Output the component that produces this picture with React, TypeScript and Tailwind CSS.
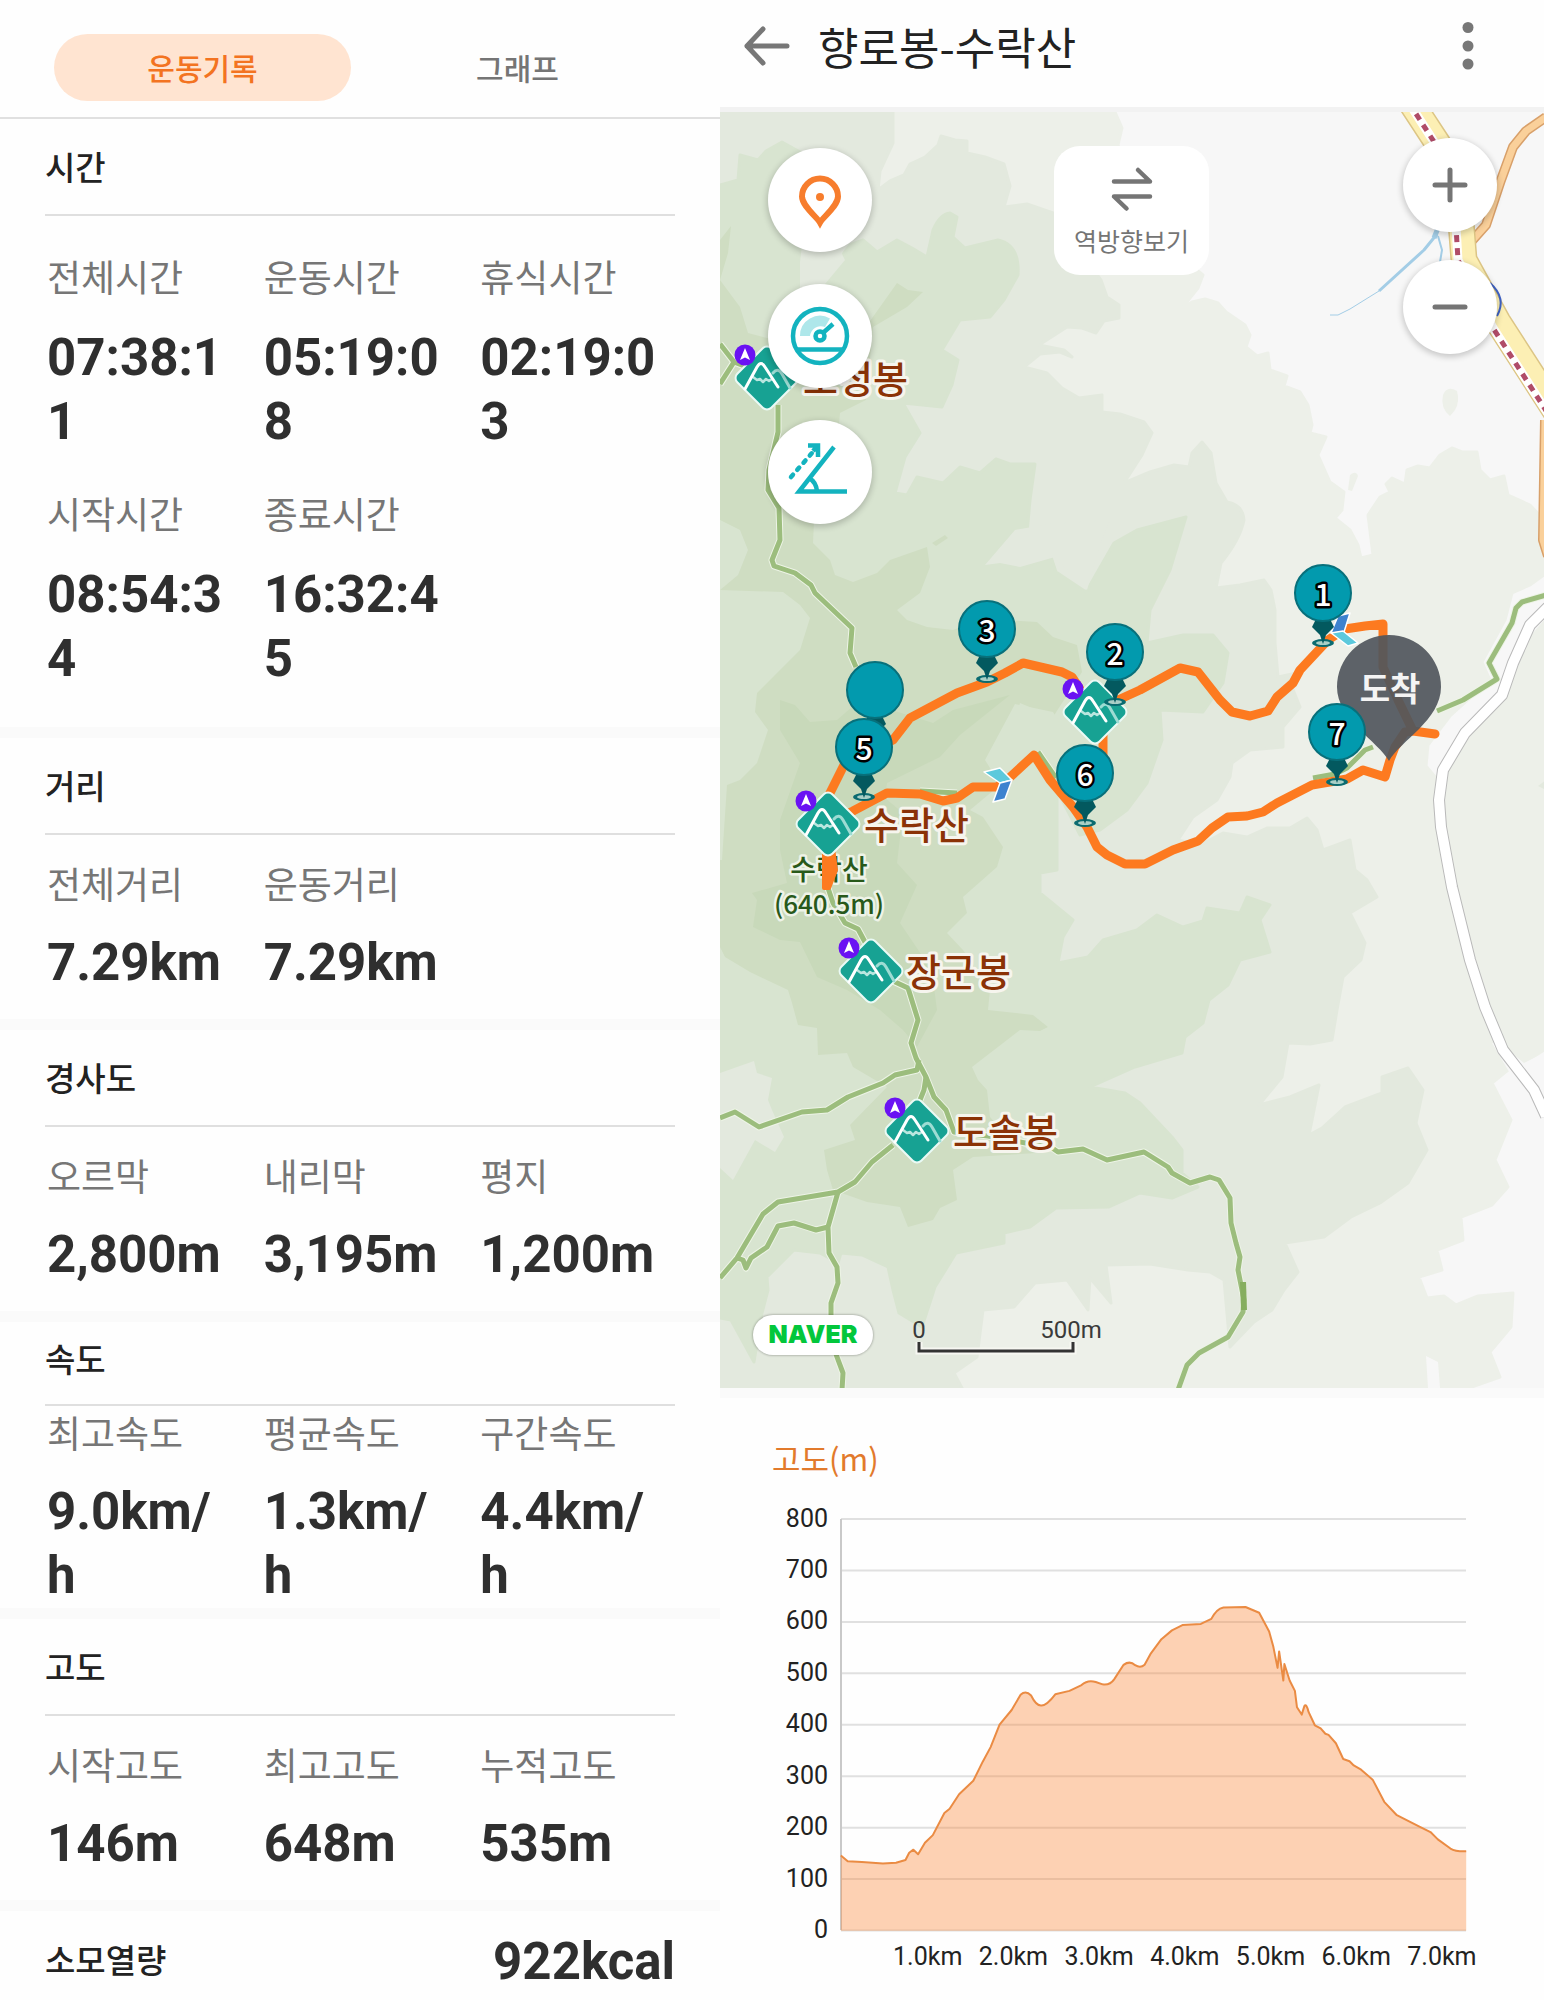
import React from "react";

type Stat = { label: string; value: string };

const timeStats: Stat[] = [
  { label: "전체시간", value: "07:38:11" },
  { label: "운동시간", value: "05:19:08" },
  { label: "휴식시간", value: "02:19:03" },
  { label: "시작시간", value: "08:54:34" },
  { label: "종료시간", value: "16:32:45" },
];

const distanceStats: Stat[] = [
  { label: "전체거리", value: "7.29km" },
  { label: "운동거리", value: "7.29km" },
];

const slopeStats: Stat[] = [
  { label: "오르막", value: "2,800m" },
  { label: "내리막", value: "3,195m" },
  { label: "평지", value: "1,200m" },
];

const speedStats: Stat[] = [
  { label: "최고속도", value: "9.0km/h" },
  { label: "평균속도", value: "1.3km/h" },
  { label: "구간속도", value: "4.4km/h" },
];

const altitudeStats: Stat[] = [
  { label: "시작고도", value: "146m" },
  { label: "최고고도", value: "648m" },
  { label: "누적고도", value: "535m" },
];

const KR = "font-['Noto_Sans_CJK_KR','Noto_Sans',sans-serif]";

function Section({
  title,
  stats,
  head = "h-[97px]",
  body = "py-6",
  gap = "gap-6",
}: {
  title: string;
  stats: Stat[];
  head?: string;
  body?: string;
  gap?: string;
}) {
  return (
    <section className="border-b-[11px] border-[#fafafa] px-[45px]">
      <h2
        className={`flex items-center border-b-2 border-[#dfdfdf] text-[33px] font-medium text-[#222] ${head}`}
      >
        {title}
      </h2>
      <dl className={`grid grid-cols-3 gap-x-[22px] gap-y-[35px] pl-[2px] ${body}`}>
        {stats.map((s) => (
          <div key={s.label} className={`flex flex-col pr-3 ${gap}`}>
            <dt className="text-[37px] leading-[48px] whitespace-nowrap text-[#767676]">{s.label}</dt>
            <dd className="font-[Roboto,sans-serif] text-[51px] leading-[64px] font-bold break-all text-[#2f2f2f]">
              {s.value}
            </dd>
          </div>
        ))}
      </dl>
    </section>
  );
}

function RecordPanel() {
  return (
    <div className="flex flex-col">
      <div
        role="tablist"
        className="grid grid-cols-2 gap-[18px] border-b-2 border-[#e0e0e0] px-[54px] pt-[34px] pb-4"
      >
        <button
          role="tab"
          aria-selected="true"
          className="h-[67px] rounded-full bg-[#ffe4d1] text-[30px] font-medium text-[#f37321]"
        >
          운동기록
        </button>
        <button role="tab" aria-selected="false" className="h-[67px] text-[30px] font-medium text-[#757575]">
          그래프
        </button>
      </div>
      <Section title="시간" stats={timeStats} body="py-9" gap="gap-[26px]" />
      <Section title="거리" stats={distanceStats} />
      <Section title="경사도" stats={slopeStats} />
      <Section title="속도" stats={speedStats} head="h-[84px] pb-2" body="pt-[2px]" />
      <Section title="고도" stats={altitudeStats} />
      <section className="flex h-[89px] items-center justify-between px-[45px] pt-[13px]">
        <h2 className="pb-1 text-[33px] font-medium text-[#222]">소모열량</h2>
        <p className="font-[Roboto,sans-serif] text-[51px] leading-[64px] font-bold text-[#2f2f2f]">922kcal</p>
      </section>
    </div>
  );
}

const trails = [
  "M720 344L734 362L720 384M734 362L752 369",
  "M778 405V432L769 470L768 490L779 508L780 540L772 560L774 566L795 573L811 585L815 593L852 628L850 653L856 667",
  "M827 885L833 903L845 923L858 929L866 944",
  "M893 981L908 988L918 1020L911 1043L916 1058L926 1077L934 1097L946 1110L954 1132L988 1136L1053 1148",
  "M720 1118L735 1112L759 1127L802 1112L827 1110L848 1097L883 1083L895 1075L917 1070L919 1060",
  "M926 1077L924 1090L920 1100",
  "M893 1145L872 1162L855 1182L838 1192L778 1202L763 1214L737 1258L720 1278",
  "M838 1192L828 1227L829 1253L837 1267L838 1283L831 1303V1340L837 1357L843 1373L842 1390",
  "M828 1227L816 1230L794 1223L778 1226L767 1247L751 1258L746 1268L743 1260L737 1258",
  "M1048 1145L1058 1152L1083 1149L1107 1160L1144 1152L1168 1167L1172 1173L1190 1183L1210 1177L1219 1180L1230 1198L1231 1223L1236 1243L1240 1257L1238 1270L1244 1300L1243 1312L1228 1337L1199 1353L1187 1365L1178 1390",
  "M1546 595L1522 602L1516 608L1512 623L1489 663L1497 679L1463 700L1437 711",
  "M1373 747L1365 750L1347 768L1335 774L1313 778",
  "M920 791L957 793M1038 752L1056 778",
];

function Terrain() {
  return (
    <g strokeLinejoin="round" strokeWidth="3">
      <rect x="720" y="112" width="824" height="1276" fill="#f7f7f7" />
      <path
        fill="#edf0e9"
        stroke="#edf0e9"
        d="M720 112H1115L1122 128L1118 145L1160 240L1203 275L1198 288L1182 308L1192 302L1205 299L1218 303L1226 312L1245 325L1250 335L1246 347L1257 356L1268 353L1270 370L1287 376L1284 386L1300 392L1308 405L1312 425L1310 433L1326 437L1318 455L1330 482L1344 492L1342 510L1335 518L1350 530L1358 545L1361 558L1373 555L1368 515L1380 497L1390 492L1386 484L1392 478L1405 484L1407 470L1418 466L1430 468L1440 455L1452 448L1462 452L1477 452L1480 470L1490 480L1504 476L1508 495L1530 505L1544 520V575L1530 585L1512 593L1505 620L1494 640L1482 662L1490 680L1470 698L1450 716L1428 745L1426 766L1436 778L1440 860L1544 1050L1524 1063L1508 1070L1492 1083L1511 1120L1495 1160L1508 1187L1492 1205L1461 1217L1463 1240L1437 1250L1442 1270L1419 1277L1427 1298L1444 1296L1456 1305L1478 1296L1513 1293L1511 1327L1490 1352L1500 1377L1469 1388H720Z"
      />
      <path fill="#edf0e9" d="M1546 618L1532 634L1515 672L1503 700L1468 736L1446 772L1441 800L1444 850L1470 955L1500 1040L1546 1052Z" />
      <path fill="#e3e9de" d="M1538 786L1546 780V790Z" />
      <path fill="#edf0e9" d="M1443 395Q1447 385 1457 391Q1460 402 1455 410L1450 416Q1440 408 1443 395ZM1350 475Q1356 470 1358 476L1352 491L1348 490Z" />
      <path fill="#f7f7f7" d="M1492 1043L1508 1070L1544 1120V1053L1524 1063L1502 1045ZM1426 1356L1438 1362L1440 1388H1428Z" />
      <path
        fill="#e3e9de"
        stroke="#e3e9de"
        d="M720 112H893V143L880 171L878 190L890 181L904 175L910 164L925 157L938 145L941 136L955 140L967 141V153L985 157L1004 164L1010 186L1004 207L1027 204L1056 214L1080 250L1101 280L1107 297L1119 305V318L1104 321L1096 333L1082 328L1067 327L1039 345L1064 350L1072 357L1060 352L1040 354L1024 367L1047 373L1062 388L1079 398L1102 395V412L1120 414L1144 422L1152 433L1142 455L1124 483L1150 472L1174 465L1189 467L1192 453L1202 442L1211 453L1216 483L1227 502Q1243 505 1244 520Q1240 540 1221 563L1216 588L1240 585L1264 580L1271 590L1275 610V643L1278 677L1297 673L1292 687L1300 707L1283 727V747L1250 750L1232 763L1230 777L1217 800L1193 817L1178 840L1200 845L1223 833L1247 837L1267 828L1290 828L1307 818L1317 830L1323 850L1350 840L1355 870L1367 880L1377 897L1350 913L1365 943L1361 960L1343 977L1337 1010L1332 1040L1310 1044L1288 1043L1282 1077L1259 1105L1290 1097L1319 1085L1309 1135L1322 1128L1345 1107L1382 1093V1077L1408 1068L1423 1090L1416 1123L1427 1150L1408 1183L1380 1203L1351 1217L1324 1237L1285 1243L1298 1272L1284 1290L1272 1310L1254 1322L1230 1347L1224 1280L1210 1272L1188 1270L1150 1264L1106 1265L1111 1303L1090 1278L1088 1310L1067 1280L1035 1283L1014 1307L983 1310L977 1357L954 1373L962 1388H720Z"
      />
      <path
        fill="#d8e4d0"
        stroke="#d8e4d0"
        d="M720 185L738 180L740 155L758 160L766 151L782 142L800 152L812 175L800 260L835 265L850 245L863 240L877 252L897 240L912 248L927 257L933 230Q940 214 950 213L957 217L953 237L965 248L998 240Q1020 245 1018 275L1004 300L990 317L960 320L942 350L958 360L952 385L942 407L903 403L920 433L905 457L895 493L907 495L917 477L943 483L960 467L980 473L996 459L1010 464L1035 464L1030 500L1024 567L1051 557L1056 572L1086 592L1114 543L1137 530L1186 517L1170 570L1150 610L1147 643L1183 635H1213L1228 653L1223 683L1203 712L1160 710L1162 740L1147 783L1127 810L1100 830L1080 835L1057 790V870L1040 873V893L1073 920L1063 937L1058 963L1088 957L1103 940L1137 930L1157 915L1183 927L1203 921L1207 908L1240 913L1247 897L1270 905L1260 920L1270 952L1240 960L1228 985L1209 1000L1203 1023L1185 1037L1182 1053L1135 1067L1090 1087L1125 1093L1140 1103L1172 1137L1182 1150V1173L1198 1187L1172 1198L1140 1193L1109 1207L1056 1208L1030 1227L1004 1233V1243L956 1253L935 1287L922 1327L899 1313L893 1290L888 1267L862 1255L841 1253L838 1263L820 1253L794 1250L767 1277L768 1290L762 1313L754 1362L731 1320L720 1318Z"
      />
      <path fill="#e3e9de" d="M720 1073L754 1061L757 1073L772 1078L768 1100L772 1110L784 1137L775 1152L755 1140L733 1180L720 1168ZM800 262L802 245L835 240L845 260L820 290L800 300ZM985 565L1015 530L1050 524L1110 520L1100 545L1087 590L1072 575L1055 557L1020 567L1000 563Z" />
      <path
        fill="#cfddc2"
        d="M720 240L731 226L728 253L720 280L740 307L748 333L767 338L860 335L880 307L897 283L908 290L923 292L907 307L873 327L866 400L840 413L837 445L815 500L813 543L830 560L835 575L853 582L877 573L890 560L927 547L930 567L920 593L897 610L907 620L927 627L953 630L973 623L1003 620L1037 622L1053 637L1077 645L1082 672L1053 717L1020 703L1010 733L987 757L1000 785L970 810L983 817L1003 847L997 867L963 897L967 913L947 933L963 950L990 990L988 1010L1033 1015L1048 1027L1040 1031L1020 1030L1007 1040L972 1067L978 1080L987 1090L990 1117L1010 1140L1036 1153L973 1157L953 1170L957 1200L940 1208L933 1220L908 1227L900 1207L867 1202L833 1190L827 1170L824 1150L855 1140L850 1125L887 1087L853 1067L847 1053L818 1055L817 1028L798 1025L792 1003L788 990L750 972L725 957L720 947Z"
      />
      <path fill="#d8e4d0" d="M720 590L783 592L800 605L810 618L800 650L775 675L757 693L755 712L768 730L757 763L740 780L727 785L722 860L720 860ZM720 520L740 530L748 550L738 575L720 590ZM1015 704L1053 712L1070 740L1050 760L1057 790L1010 800L985 760Z" />
      <path
        fill="#c8d9ba"
        d="M780 700L795 705L810 722L837 720L860 700L933 723L953 710L1010 695L960 735L940 757L887 783L885 798L903 813L897 863L917 885L900 923L925 960L933 980L937 1010L917 1047L903 1030L880 1010L847 990L817 977L800 942L780 940L753 927L757 900L752 893L787 883L780 850V820L800 763L780 730Z"
      />
      <path fill="#cfddc2" d="M932 543L945 535L948 538L936 546Z" />
    </g>
  );
}

function Roads() {
  return (
    <g fill="none" strokeLinejoin="round">
      <g stroke="#a3cde6">
        <path strokeWidth="4" d="M1428 112L1432 122L1446 138" />
        <path strokeWidth="5" d="M1438 228L1434 238" />
        <path strokeWidth="3" d="M1437 234L1424 250L1379 291" />
        <path strokeWidth="1" d="M1379 291L1350 309L1338 315H1330" />
        <path strokeWidth="2" d="M1438 236L1442 250L1440 262" />
      </g>
      <path stroke="#d8a06a" strokeWidth="10" d="M1546 117L1526 131L1513 147L1501 180L1486 225L1470 243M1545 420L1543 540L1548 556" />
      <path stroke="#fad09a" strokeWidth="7" d="M1546 117L1526 131L1513 147L1501 180L1486 225L1470 243M1545 420L1543 540L1548 556" />
      <path stroke="#dcc585" strokeWidth="27" d="M1404 92L1442 150L1460 210L1464 260L1498 322L1556 412" />
      <path stroke="#fcefb4" strokeWidth="24" d="M1404 92L1442 150L1460 210L1464 260L1498 322L1556 412" />
      <path stroke="#ffffff" strokeWidth="9" d="M1402 92L1438 148L1455 210L1458 260L1493 328L1552 420" />
      <path stroke="#b04c68" strokeWidth="5" strokeDasharray="7 6" d="M1402 92L1438 148L1455 210L1458 260L1493 328L1552 420" />
      <path stroke="#3f62c4" strokeWidth="2" d="M1490 283Q1507 298 1497 316" />
      {trails.map((d) => (
        <path key={d} d={d} stroke="#edf4e6" strokeWidth="7" />
      ))}
      {trails.map((d) => (
        <path key={d} d={d} stroke="#9cbd7d" strokeWidth="5" />
      ))}
      <path stroke="#86ae5f" strokeWidth="6" d="M1243 1282L1244 1310" />
      <path stroke="#b9b9b9" strokeWidth="12" d="M1548 607L1530 625L1513 663L1502 695L1465 733L1443 770L1439 800L1441 827L1452 887L1470 960L1485 1007L1503 1050L1534 1090L1546 1116" />
      <path stroke="#ffffff" strokeWidth="10" d="M1548 607L1530 625L1513 663L1502 695L1465 733L1443 770L1439 800L1441 827L1452 887L1470 960L1485 1007L1503 1050L1534 1090L1546 1116" />
    </g>
  );
}

function Route() {
  return (
    <g fill="none" stroke="#fd7a20" strokeWidth="9" strokeLinecap="round" strokeLinejoin="round">
      <path d="M1435 734L1413 731L1398 700L1383 667V624L1365 626L1345 629L1328 640L1300 670L1293 683L1277 697L1268 711L1250 716L1232 712L1220 700L1198 672L1180 668L1140 690L1118 700L1095 712L1072 677L1062 672L1023 663L1005 673L987 682L957 693L910 718L893 740L845 763L828 797V823L853 811L887 793L920 794L943 801L957 798L973 787H997L1008 779L1034 755L1050 780L1073 807L1087 827L1097 847L1107 855L1125 864H1145L1173 850L1198 841L1212 828L1228 817L1247 816L1263 812L1277 803L1312 785L1347 779L1363 770L1385 777L1390 760L1395 747L1405 732L1413 731" />
      <path d="M1103 722V765" />
      <path fill="#fd7a20" strokeWidth="4" d="M824 848H833L836 870L829 888H824Z" />
    </g>
  );
}

function Peak({ x, y }: { x: number; y: number }) {
  return (
    <g transform={`translate(${x} ${y})`} fill="none" strokeLinecap="round" strokeLinejoin="round">
      <rect x="-24" y="-24" width="48" height="48" rx="6" transform="rotate(45)" fill="#17a293" stroke="#eafaf5" strokeWidth="2" />
      <path stroke="#9ddcd3" strokeWidth="3" d="M6 -5Q11 -11 15 -4L23 10" />
      <path stroke="#b9e6df" strokeWidth="2.5" d="M-14 -1L-10 2L-7 1L-4 4L-1 1L2 3L5 1" />
      <path stroke="#ffffff" strokeWidth="3" d="M-22 11L-10 -11Q-6 -18 -2 -11L11 9" />
      <circle cx="-22" cy="-23" r="10.5" fill="#6a12f3" />
      <path fill="#ffffff" d="M-22 -30L-17 -18L-22 -20.5L-27 -18Z" />
    </g>
  );
}

function Pin({ x, y, n }: { x: number; y: number; n?: string }) {
  return (
    <g transform={`translate(${x} ${y})`}>
      <ellipse cy="50" rx="11" ry="4" fill="#0a6b70" />
      <ellipse cy="50" rx="7" ry="2" fill="#a9cfc6" />
      <path fill="#03595f" d="M-7 26H7L11 34L3 42L0 51L-3 42L-11 34Z" />
      <circle r="28" fill="#029aae" stroke="#08707b" strokeWidth="2" />
      {n && (
        <text
          y="13"
          textAnchor="middle"
          fill="#fff"
          stroke="#000"
          strokeWidth="5"
          strokeLinejoin="round"
          paintOrder="stroke"
          className="text-[30px] font-medium"
        >
          {n}
        </text>
      )}
    </g>
  );
}

function PlaceName({ x, y, children }: { x: number; y: number; children: string }) {
  return (
    <text
      x={x}
      y={y}
      fill="#8b3206"
      stroke="#f6f5ee"
      strokeWidth="6"
      strokeLinejoin="round"
      paintOrder="stroke"
      className="text-[38px] font-medium"
    >
      {children}
    </text>
  );
}

function MapCanvas() {
  return (
    <svg viewBox="720 112 824 1276" className="block w-full" role="img" aria-label="향로봉-수락산 지도">
      <Terrain />
      <Roads />
      <text
        textAnchor="middle"
        fill="#28591a"
        stroke="#eef3e8"
        strokeWidth="5"
        strokeLinejoin="round"
        paintOrder="stroke"
        className="text-[26px] font-medium"
      >
        <tspan x="829" y="880" className="text-[28px]">수락산</tspan>
        <tspan x="829" y="914">(640.5m)</tspan>
      </text>
      <Route />
      <g stroke="#fff" strokeWidth="1.5" strokeLinejoin="round">
        <path fill="#3d82cf" d="M1338 616L1350 613L1344 632L1331 633Z" />
        <path fill="#5cc9dc" d="M1331 633L1343 631L1358 643L1348 646Z" />
        <path fill="#5cc9dc" d="M984 772L1000 768L1012 780L1000 783Z" />
        <path fill="#3d82cf" d="M1000 783L1012 780L1005 799L993 802Z" />
      </g>
      <Peak x={767} y={378} />
      <Peak x={1095} y={712} />
      <Peak x={828} y={824} />
      <Peak x={871} y={971} />
      <Peak x={917} y={1131} />
      <PlaceName x={803} y={393}>도정봉</PlaceName>
      <PlaceName x={864} y={839}>수락산</PlaceName>
      <PlaceName x={906} y={986}>장군봉</PlaceName>
      <PlaceName x={953} y={1146}>도솔봉</PlaceName>
      <path
        fill="#50565c"
        fillOpacity="0.92"
        d="M1389 761C1378 741 1337 720 1337 687A52 52 0 0 1 1441 687C1441 720 1400 741 1389 761Z"
      />
      <text x="1390" y="701" textAnchor="middle" fill="#f4f4f4" className="text-[33px] font-bold">
        도착
      </text>
      <Pin x={1323} y={593} n="1" />
      <Pin x={1115} y={652} n="2" />
      <Pin x={987} y={629} n="3" />
      <Pin x={875} y={690} />
      <Pin x={864} y={747} n="5" />
      <Pin x={1085} y={773} n="6" />
      <Pin x={1337} y={732} n="7" />
      <path d="M919 1342V1351H1073V1342" fill="none" stroke="#f7f7f2" strokeWidth="7" />
      <path d="M919 1342V1351H1073V1342" fill="none" stroke="#333" strokeWidth="3" />
      <g textAnchor="middle" fill="#3a3a3a" className="font-[Roboto,sans-serif] text-[24px]">
        <text x="919" y="1338">0</text>
        <text x="1071" y="1338">500m</text>
      </g>
    </svg>
  );
}

const roundButton =
  "flex items-center justify-center rounded-full bg-white shadow-[0_2px_6px_1px_rgba(0,0,0,0.2)]";

function MapView() {
  return (
    <div className="relative">
      <MapCanvas />
      <div className="absolute top-9 left-12 flex flex-col gap-8">
        <button aria-label="위치" className={`size-[104px] ${roundButton}`}>
          <svg viewBox="0 0 104 104" className="size-[104px]" fill="none">
            <path
              stroke="#f77d2d"
              strokeWidth="6"
              d="M52 74.5C49 69 34 58 34 48.500A18 18 0 0 1 70 48.500C70 58 55 69 52 74.5Z"
            />
            <circle cx="52" cy="49" r="4" fill="#f77d2d" />
          </svg>
        </button>
        <button aria-label="속도" className={`size-[104px] ${roundButton}`}>
          <svg viewBox="0 0 104 104" className="size-[104px]" fill="none" stroke="#13b3bf" strokeWidth="4.500">
            <path stroke="none" fill="#aee7ea" d="M32 52A20 20 0 0 1 62 34.500L57 43A11 11 0 0 0 42 52Z" />
            <circle cx="52" cy="52" r="27" />
            <path d="M28 65.500H76M56 48L65 40" />
            <circle cx="52" cy="52" r="4.500" fill="#fff" />
          </svg>
        </button>
        <button aria-label="경사" className={`size-[104px] ${roundButton}`}>
          <svg viewBox="0 0 104 104" className="size-[104px]" fill="none" stroke="#13b3bf" strokeWidth="4.500">
            <path d="M79 71.500H31L66 27M41 58Q48 62 49 71" />
            <path strokeDasharray="3 6.500" strokeLinecap="round" d="M23 57L44 33" />
            <path d="M40 25.500H50V37M50 25.500L45 31" />
          </svg>
        </button>
      </div>
      <button className="absolute top-[34px] left-[334px] flex h-[129px] w-[155px] flex-col items-center rounded-[26px] bg-white pt-[19px] text-[25px] leading-9 text-[#757575]">
        <svg
          viewBox="0 0 48 48"
          className="mb-[9px] size-12"
          fill="none"
          stroke="#757575"
          strokeWidth="4.500"
          strokeLinecap="round"
          strokeLinejoin="round"
        >
          <path d="M6 16.500H42L30 5M42 31.500H6L18.500 43.500" />
        </svg>
        역방향보기
      </button>
      <div className="absolute top-[26px] right-[47px] flex flex-col gap-7">
        <button aria-label="확대" className={`size-[94px] ${roundButton}`}>
          <svg viewBox="0 0 40 40" className="size-10" stroke="#757575" strokeWidth="5" strokeLinecap="round">
            <path d="M5 20H35M20 5V35" />
          </svg>
        </button>
        <button aria-label="축소" className={`size-[94px] ${roundButton}`}>
          <svg viewBox="0 0 40 40" className="size-10" stroke="#757575" strokeWidth="5" strokeLinecap="round">
            <path d="M5 20H35" />
          </svg>
        </button>
      </div>
      <a
        href="#naver"
        className="absolute bottom-[33px] left-[33px] flex h-10 w-[120px] items-center justify-center rounded-full bg-white font-[Inter,sans-serif] text-[25px] font-black text-[#03c73c] shadow-[0_0_2px_1px_rgba(0,0,0,0.2)]"
      >
        NAVER
      </a>
    </div>
  );
}

const altitudeTicks = [800, 700, 600, 500, 400, 300, 200, 100, 0];
const distanceTicks = [1, 2, 3, 4, 5, 6, 7];

/* Elevation profile in a 1568-unit square plotting space. */
const profile =
  "M230 1190L243 1205L270 1207L310 1211L335 1209L353 1202L360 1183L368 1175L377 1187L390 1157L405 1137L427 1079L437 1068L455 1030L482 995L500 945L515 907L532 848L555 810L572 770Q582 758 592 772Q602 800 612 798Q622 798 638 769L665 760L688 745Q700 730 715 737L728 743Q742 746 750 730L768 692Q780 680 790 693Q800 702 808 692L820 662L840 625L860 602L880 588L915 585L935 572Q945 545 958 542L1000 541L1026 556L1045 605L1053 645L1061 700L1064 657L1072 733L1074 690L1084 733L1094 760L1098 803L1107 822L1112 800Q1116 792 1120 815L1132 850L1143 858L1152 872L1158 875L1172 897L1186 938L1198 944L1206 955L1220 966L1242 992L1264 1050L1288 1085L1330 1114L1352 1129L1366 1148L1390 1172Q1400 1180 1420 1179";

function AltitudeChart() {
  return (
    <svg viewBox="720 1500 824 500" className="block w-full" role="img" aria-label="고도 그래프">
      <g stroke="#e0e0e0" strokeWidth="2">
        {altitudeTicks.map((v) => (
          <path key={v} d={`M841 ${1930.5 - v * 0.5143}H1466`} />
        ))}
      </g>
      <path d="M841 1519V1930" stroke="#c9c9c9" strokeWidth="2" />
      <g transform="translate(720 1400) scale(0.5255 0.3827)">
        <path d={`${profile}V1387H230Z`} fill="#fd7d29" fillOpacity="0.35" />
        <path d={profile} fill="none" stroke="#ea8b43" strokeWidth="2" strokeLinejoin="round" vectorEffect="non-scaling-stroke" />
      </g>
      <g fill="#222" className="font-[Roboto,sans-serif] text-[25px]">
        {altitudeTicks.map((v) => (
          <text key={v} x="828" y={1938 - v * 0.5143} textAnchor="end">
            {v}
          </text>
        ))}
        {distanceTicks.map((k) => (
          <text key={k} x={842 + k * 85.7} y="1965" textAnchor="middle">
            {`${k}.0km`}
          </text>
        ))}
      </g>
    </svg>
  );
}

function CoursePanel() {
  return (
    <div className="flex flex-col">
      <header className="flex h-28 items-center border-b-[5px] border-[#f2f2f2] pr-14 pb-4 pl-[22px]">
        <button aria-label="뒤로" className="flex size-12 items-center justify-center">
          <svg
            viewBox="0 0 48 48"
            className="size-12"
            fill="none"
            stroke="#777"
            strokeWidth="5"
            strokeLinecap="round"
            strokeLinejoin="round"
          >
            <path d="M45 24H5M21 7L5 24L21 41" />
          </svg>
        </button>
        <h1 className="ml-7 flex-1 text-[44px] leading-[64px] text-[#222]">향로봉-수락산</h1>
        <button aria-label="더보기" className="flex h-12 w-10 items-center justify-center">
          <svg viewBox="0 0 12 48" className="h-12 w-3" fill="#777">
            <circle cx="6" cy="5.500" r="5.500" />
            <circle cx="6" cy="24" r="5.500" />
            <circle cx="6" cy="42" r="5.500" />
          </svg>
        </button>
      </header>
      <MapView />
      <section className="border-t-[10px] border-[#fafafa]">
        <h2 className="mt-[38px] mb-5 pl-[52px] text-[31px] leading-[44px] text-[#e27a2c]">고도(m)</h2>
        <AltitudeChart />
      </section>
    </div>
  );
}

export default function App() {
  return (
    <main className={`grid min-h-screen grid-cols-[720fr_824fr] bg-[#fefefe] ${KR}`}>
      <RecordPanel />
      <CoursePanel />
    </main>
  );
}
